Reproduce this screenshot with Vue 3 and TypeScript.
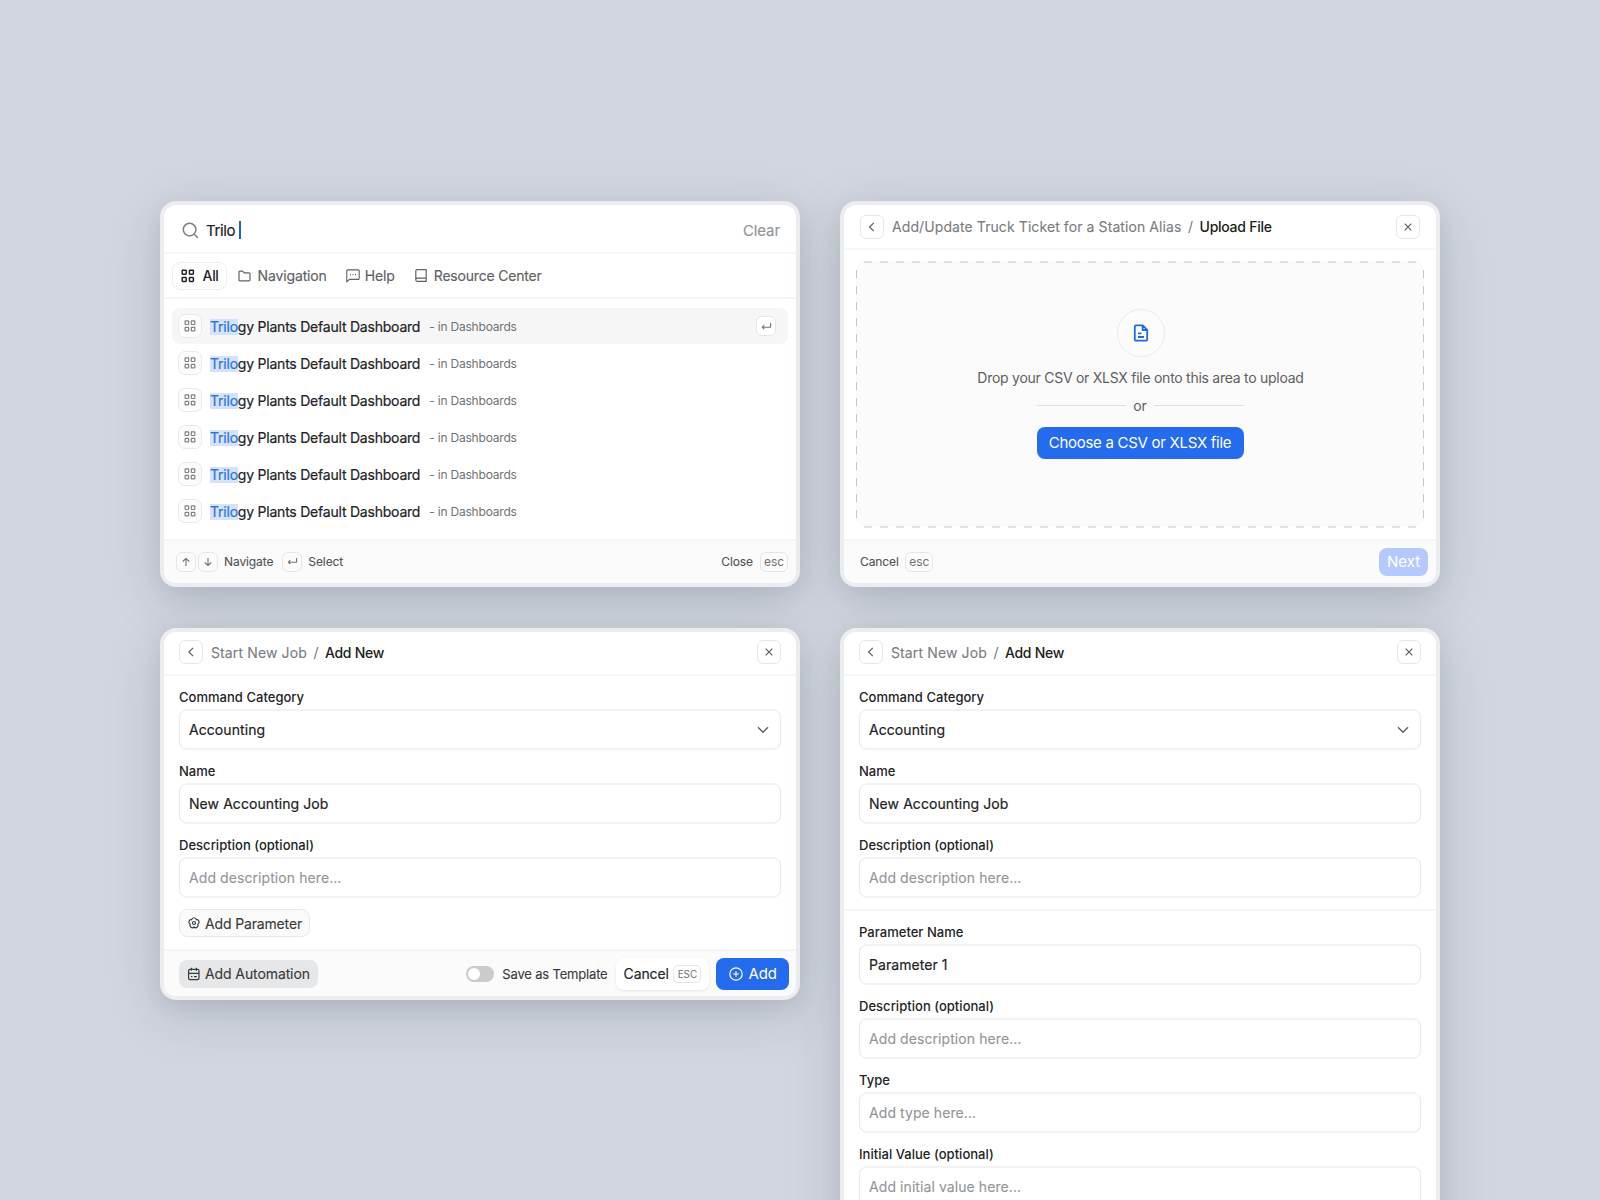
<script setup lang="ts">
interface Field {
  label: string
  value?: string
  placeholder?: string
  select?: boolean
}

const jobFields: Field[] = [
  { label: 'Command Category', value: 'Accounting', select: true },
  { label: 'Name', value: 'New Accounting Job' },
  { label: 'Description (optional)', placeholder: 'Add description here...' },
]

const parameterFields: Field[] = [
  { label: 'Parameter Name', value: 'Parameter 1' },
  { label: 'Description (optional)', placeholder: 'Add description here...' },
  { label: 'Type', placeholder: 'Add type here...' },
  { label: 'Initial Value (optional)', placeholder: 'Add initial value here...' },
]

const jobSections: Field[][] = [jobFields, parameterFields]
const results: number[] = [1, 2, 3, 4, 5, 6]
</script>

<template>
  <main class="page">
    <div class="column left">
      <!-- Command search -->
      <section class="card search-card">
        <div class="inner">
          <header class="search-bar">
            <svg class="search-icon" width="17" height="17" viewBox="0 0 17 17">
              <circle cx="7.6" cy="7.6" r="6.3" />
              <path d="M12.3 12.3 16 16" />
            </svg>
            <span class="query">Trilo</span><i class="caret"></i>
            <span class="clear">Clear</span>
          </header>

          <nav class="tabs">
            <span class="tab active">
              <svg width="14" height="14" viewBox="0 0 14 14">
                <rect x="1.2" y="1.2" width="4" height="4" rx=".6" /><rect x="8.4" y="1.2" width="4" height="4" rx=".6" />
                <rect x="1.2" y="8.4" width="4" height="4" rx=".6" /><rect x="8.4" y="8.4" width="4" height="4" rx=".6" />
              </svg>
              All
            </span>
            <span class="tab navigation">
              <svg width="13" height="12" viewBox="0 0 13 12">
                <path d="M1 10V2.2Q1 1.2 2 1.2H4.6L6.2 2.9H10.8Q12 2.9 12 4V9.8Q12 10.9 10.8 10.9H2Q1 10.9 1 10Z" />
              </svg>
              Navigation
            </span>
            <span class="tab help">
              <svg width="14" height="14" viewBox="0 0 14 14">
                <path d="M.8 12.8V1.9Q.8 .9 1.8 .9H12.2Q13.2 .9 13.2 1.9V9.4Q13.2 10.4 12.2 10.4H3.4Z" />
                <path d="M4 5.6h1M6.5 5.6h1M9 5.6h1" />
              </svg>
              Help
            </span>
            <span class="tab resource">
              <svg width="12" height="13" viewBox="0 0 12 13">
                <path d="M2.2 .7H11.2V12.3H2.3Q.8 12.3 .8 10.8V2.1Q.8 .7 2.2 .7ZM.8 10.6Q.9 9.2 2.3 9.2H11.2" />
              </svg>
              Resource Center
            </span>
          </nav>

          <ul class="results">
            <li v-for="n in results" :key="n" :class="{ selected: n === 1 }">
              <span class="tile">
                <svg width="12" height="12" viewBox="0 0 12 12">
                  <rect x="1.1" y=".9" width="3.5" height="3.6" rx=".4" /><rect x="7.3" y=".9" width="3.5" height="3.6" rx=".4" />
                  <rect x="1.1" y="7.3" width="3.5" height="3.6" rx=".4" /><rect x="7.3" y="7.3" width="3.5" height="3.6" rx=".4" />
                </svg>
              </span>
              <span class="title"><mark>Trilo</mark>gy Plants Default Dashboard</span>
              <span class="where">- in Dashboards</span>
              <span v-if="n === 1" class="key enter">
                <svg width="11" height="9" viewBox="0 0 11 9"><path d="M9.6 1V5.2H1.3M3.3 3.2 1.3 5.2 3.3 7.2" /></svg>
              </span>
            </li>
          </ul>

          <footer class="foot">
            <span class="key"><svg width="10" height="10" viewBox="0 0 10 10"><path d="M5 9V1.4M1.8 4.5 5 1.3 8.2 4.5" /></svg></span>
            <span class="key next-key"><svg width="10" height="10" viewBox="0 0 10 10"><path d="M5 1V8.6M1.8 5.5 5 8.7 8.2 5.5" /></svg></span>
            <span class="hint">Navigate</span>
            <span class="key select-key"><svg width="11" height="9" viewBox="0 0 11 9"><path d="M9.6 1V5.2H1.3M3.3 3.2 1.3 5.2 3.3 7.2" /></svg></span>
            <span class="hint">Select</span>
            <span class="hint push">Close</span>
            <span class="key esc">esc</span>
          </footer>
        </div>
      </section>

      <!-- New job, compact -->
      <section class="card job-card">
        <div class="inner">
          <header class="crumbs">
            <span class="square"><svg width="12" height="12" viewBox="0 0 12 12"><path d="M8.1 1.8 3.9 6 8.1 10.2" /></svg></span>
            <span class="parent">Start New Job</span><span class="slash">/</span><span class="current">Add New</span>
            <span class="square close"><svg width="12" height="12" viewBox="0 0 12 12"><path d="M2.7 2.7 9.3 9.3M9.3 2.7 2.7 9.3" /></svg></span>
          </header>
          <div class="form">
            <label v-for="f in jobFields" :key="f.label" class="field">
              <span class="label">{{ f.label }}</span>
              <span class="box">
                <span :class="f.value ? 'value' : 'placeholder'">{{ f.value ?? f.placeholder }}</span>
                <svg v-if="f.select" width="12" height="8" viewBox="0 0 12 8"><path d="M1 1.3 6 6.3 11 1.3" /></svg>
              </span>
            </label>
            <button class="soft-button">
              <svg width="14" height="14" viewBox="-7 -7 14 14">
                <path d="M-2.35-3.24A2.38 2.38 0 0 1 2.35-3.24A2.38 2.38 0 0 1 3.8 1.24A2.38 2.38 0 0 1 0 4A2.38 2.38 0 0 1-3.8 1.24A2.38 2.38 0 0 1-2.35-3.24Z" />
                <circle cx="0" cy="0" r="1.5" />
              </svg>
              Add Parameter
            </button>
          </div>
          <footer class="foot job-foot">
            <button class="grey-button">
              <svg width="14" height="14" viewBox="0 0 14 14">
                <rect x="1.6" y="2.4" width="10.4" height="10.2" rx="1.4" />
                <path d="M4.3 .8V3.8M9.4 .8V3.8M1.8 6.4H12M4 9.6H5.4M7 9.6H9.8" />
              </svg>
              Add Automation
            </button>
            <span class="toggle"></span>
            <span class="toggle-label">Save as Template</span>
            <button class="cancel-button">Cancel<span class="key caps">ESC</span></button>
            <button class="add-button">
              <svg width="14" height="14" viewBox="0 0 14 14"><circle cx="7" cy="7" r="6.2" /><path d="M7 4.2V9.8M4.2 7H9.8" /></svg>
              Add
            </button>
          </footer>
        </div>
      </section>
    </div>

    <div class="column right">
      <!-- Upload -->
      <section class="card upload-card">
        <div class="inner">
          <header class="crumbs">
            <span class="square"><svg width="12" height="12" viewBox="0 0 12 12"><path d="M7.8 1.8 3.6 6 7.8 10.2" /></svg></span>
            <span class="parent long">Add/Update Truck Ticket for a Station Alias</span><span class="slash">/</span><span class="current">Upload File</span>
            <span class="square close"><svg width="12" height="12" viewBox="0 0 12 12"><path d="M2.7 2.7 9.3 9.3M9.3 2.7 2.7 9.3" /></svg></span>
          </header>
          <div class="drop">
            <svg class="dashes" width="568" height="267" viewBox="0 0 568 267">
              <path d="M8 1H560M8 266H560M.5 9V259M567.5 9V259" />
            </svg>
            <span class="disc">
              <svg width="16" height="18" viewBox="0 0 16 18">
                <path d="M9.7 1.3H3.1Q1.8 1.3 1.8 2.6V15.4Q1.8 16.7 3.1 16.7H12.9Q14.2 16.7 14.2 15.4V5.8ZM9.6 1.6V6H14M5 9.4H8.4M5 13H11" />
              </svg>
            </span>
            <p class="drop-text">Drop your CSV or XLSX file onto this area to upload</p>
            <div class="or"><i></i><span>or</span><i></i></div>
            <button class="choose">Choose a CSV or XLSX file</button>
          </div>
          <footer class="foot upload-foot">
            <span class="hint">Cancel</span>
            <span class="key esc">esc</span>
            <button class="next">Next</button>
          </footer>
        </div>
      </section>

      <!-- New job, with parameter -->
      <section class="card long-card">
        <div class="inner">
          <header class="crumbs">
            <span class="square"><svg width="12" height="12" viewBox="0 0 12 12"><path d="M7.8 1.8 3.6 6 7.8 10.2" /></svg></span>
            <span class="parent">Start New Job</span><span class="slash">/</span><span class="current">Add New</span>
            <span class="square close"><svg width="12" height="12" viewBox="0 0 12 12"><path d="M2.7 2.7 9.3 9.3M9.3 2.7 2.7 9.3" /></svg></span>
          </header>
          <div v-for="(section, i) in jobSections" :key="i" class="form">
            <label v-for="f in section" :key="f.label" class="field">
              <span class="label">{{ f.label }}</span>
              <span class="box">
                <span :class="f.value ? 'value' : 'placeholder'">{{ f.value ?? f.placeholder }}</span>
                <svg v-if="f.select" width="12" height="8" viewBox="0 0 12 8"><path d="M1 1.3 6 6.3 11 1.3" /></svg>
              </span>
            </label>
          </div>
        </div>
      </section>
    </div>
  </main>
</template>

<style>
body {
  margin: 0;
  background: #d1d6df;
}
</style>

<style scoped>
* {
  box-sizing: border-box;
}

.page {
  width: 1600px;
  height: 1200px;
  overflow: hidden;
  padding: 201px 160px 0;
  display: flex;
  gap: 40px;
  background: #d1d6df;
  color: #222326;
  font-family: Inter, "Liberation Sans", sans-serif;
  font-size: 14px;
}

.column {
  display: flex;
  flex-direction: column;
  gap: 41px;
}
.left { width: 640px; }
.right { width: 600px; }

.card {
  flex: none;
  padding: 4px;
  border-radius: 16px;
  background: #ebedf0;
  box-shadow: 0 8px 20px rgba(45, 54, 70, .09), 0 14px 56px rgba(45, 54, 70, .15);
}
.search-card, .upload-card { height: 386px; }
.job-card { height: 372px; }
.long-card { height: 760px; }

.inner {
  height: 100%;
  display: flex;
  flex-direction: column;
  overflow: hidden;
  border-radius: 12px;
  background: #fff;
}

svg {
  flex: none;
  fill: none;
  stroke: currentColor;
  stroke-width: 1.2;
  stroke-linejoin: round;
}

button {
  display: flex;
  align-items: center;
  border: 0;
  padding: 0;
  font: inherit;
  color: inherit;
  white-space: nowrap;
}

/* search bar */
.search-bar {
  height: 49px;
  flex: none;
  display: flex;
  align-items: center;
  padding: 3px 16px 0 17.5px;
  border-bottom: 2px solid #f5f6f7;
  font-size: 15px;
}
.search-icon { color: #7d7f82; stroke-width: 1.5; }
.query { margin-left: 7.5px; letter-spacing: -.38px; -webkit-text-stroke: .2px; }
.caret { width: 2px; height: 18px; margin-left: 3.5px; background: #1b63c0; }
.clear { margin-left: auto; letter-spacing: -.1px; color: #939598; -webkit-text-stroke: .15px; }

.tabs {
  height: 45px;
  flex: none;
  display: flex;
  align-items: center;
  padding-left: 8px;
  border-bottom: 2px solid #f5f6f7;
  color: #5f6164;
  letter-spacing: -.13px;
  -webkit-text-stroke: .15px;
}
.tab { display: flex; align-items: center; white-space: nowrap; }
.tab.active {
  width: 55px;
  height: 28px;
  padding-left: 8px;
  gap: 7.5px;
  border: 1px solid #efeff0;
  border-radius: 8px;
  color: #222326;
  font-weight: 500;
  letter-spacing: -.3px;
  -webkit-text-stroke: 0;
}
.active svg { stroke-width: 1.5; }
.navigation { margin-left: 11px; gap: 6.5px; }
.help { margin-left: 19px; gap: 5px; }
.help svg { stroke-width: 1.1; }
.resource { margin-left: 20.5px; gap: 6.5px; letter-spacing: -.19px; }

.results {
  flex: 1;
  margin: 0;
  padding: 9px 8px 0;
  list-style: none;
}
.results li {
  height: 36px;
  margin-bottom: 1px;
  display: flex;
  align-items: center;
  padding: 0 12px 0 6px;
  border-radius: 8px;
}
.results li.selected { background: #f6f6f7; }
.tile {
  width: 24px;
  height: 24px;
  display: flex;
  align-items: center;
  justify-content: center;
  border: 1px solid #e9e9ea;
  border-radius: 7px;
  background: #fcfcfc;
  color: #828386;
}
.title { margin-left: 8px; letter-spacing: -.22px; -webkit-text-stroke: .2px; }
mark {
  display: inline-block;
  height: 16px;
  line-height: 16px;
  background: #d4e3fa;
  color: #2b74dd;
}
.where { margin-left: 9px; font-size: 12px; letter-spacing: -.2px; color: #707275; }

.key {
  width: 20px;
  height: 20px;
  display: flex;
  align-items: center;
  justify-content: center;
  border: 1px solid #e5e6e7;
  border-radius: 6px;
  color: #707275;
  font-size: 12px;
}
.key svg { stroke-width: 1.1; }
.enter { margin-left: auto; background: #fff; }
.key.esc { width: 28px; margin-left: 7px; }

.foot {
  height: 44px;
  flex: none;
  display: flex;
  align-items: center;
  padding: 0 8px 1px 12px;
  border-top: 2px solid #f4f5f5;
  background: #fbfbfb;
}
.next-key { margin-left: 2px; }
.select-key { margin-left: 9px; }
.hint { margin-left: 6px; font-size: 12px; letter-spacing: -.1px; color: #515356; -webkit-text-stroke: .1px; }
.hint.push { margin-left: auto; }

/* breadcrumbs */
.crumbs {
  height: 44px;
  flex: none;
  display: flex;
  align-items: center;
  padding: 0 15px 0 16px;
  border-bottom: 2px solid #f5f6f7;
}
.upload-card .crumbs { height: 45px; padding-right: 16px; }
.job-card .crumbs, .long-card .crumbs { padding-left: 15px; padding-bottom: 2px; }
.square {
  width: 24px;
  height: 24px;
  display: flex;
  align-items: center;
  justify-content: center;
  border: 1px solid #e6e6e7;
  border-radius: 6px;
  color: #5f6164;
}
.square.close { margin-left: auto; }
.parent { margin-left: 8px; letter-spacing: .12px; color: #7a7c7f; -webkit-text-stroke: .1px; }
.parent.long { letter-spacing: .09px; }
.slash { margin: 0 6.5px 0 6.5px; color: #76787b; }
.current { font-weight: 500; letter-spacing: -.27px; color: #1c1d20; }

/* forms */
.form { padding: 8px 15px 0; }
.form + .form { border-top: 2px solid #f5f6f7; margin-top: 3px; }
.field { display: block; height: 74px; }
.label {
  display: block;
  height: 25px;
  line-height: 27px;
  font-size: 13px;
  font-weight: 500;
  letter-spacing: .03px;
}
.box {
  height: 41px;
  display: flex;
  align-items: center;
  justify-content: space-between;
  padding: 0 11px 0 9px;
  border: 1px solid #e9e9ea;
  border-top: 2px solid #f3f3f4;
  border-bottom: 2px solid #f3f3f4;
  border-radius: 8px;
}
.box svg { color: #606265; stroke-width: 1.4; }
.value { letter-spacing: .07px; -webkit-text-stroke: .2px; }
.placeholder { letter-spacing: .08px; color: #939598; -webkit-text-stroke: .1px; }

.soft-button, .grey-button {
  height: 28px;
  padding-left: 7px;
  gap: 4px;
  border-radius: 8px;
  letter-spacing: -.15px;
  color: #38393c;
  -webkit-text-stroke: .1px;
}
.soft-button {
  width: 131px;
  margin-top: 3px;
  border: 1px solid #e9e9ea;
  background: #fafafa;
}
.grey-button { width: 139px; padding-left: 8px; background: #e6e7e8; letter-spacing: -.1px; }

.job-foot { height: 47px; margin-top: auto; padding: 0 7px 0 15px; }
.toggle {
  width: 28px;
  height: 16px;
  margin-left: auto;
  padding: 2px;
  border-radius: 8px;
  background: #cacbcd;
}
.toggle::before {
  content: "";
  display: block;
  width: 12px;
  height: 12px;
  border-radius: 50%;
  background: #fff;
}
.toggle-label { margin-left: 8px; font-size: 13px; letter-spacing: -.18px; color: #38393c; -webkit-text-stroke: .1px; }
.cancel-button {
  width: 92.5px;
  height: 32px;
  margin-left: 8.5px;
  padding-left: 7.5px;
  border-radius: 8px;
  background: #fff;
  box-shadow: 0 1px 3px rgba(0, 0, 0, .09);
  letter-spacing: -.08px;
  -webkit-text-stroke: .15px;
}
.key.caps { width: 28px; height: 18px; margin-left: 4.5px; border-radius: 5px; font-size: 10px; -webkit-text-stroke: 0; }
.add-button {
  width: 73px;
  height: 32px;
  margin-left: 7.5px;
  padding-left: 13px;
  gap: 5.5px;
  border-radius: 8px;
  background: #246bee;
  color: #fff;
  font-size: 15px;
  letter-spacing: -.15px;
}

/* upload */
.drop {
  position: relative;
  height: 267px;
  margin: 11px 12px 12px;
  display: flex;
  flex-direction: column;
  align-items: center;
  border-radius: 10px;
  background: #fbfbfb;
}
.dashes {
  position: absolute;
  inset: 0;
  stroke: #c6c7c9;
  stroke-width: 1;
  stroke-dasharray: 8 8;
}
.disc {
  width: 48px;
  height: 48px;
  margin-top: 48px;
  margin-left: 1.5px;
  display: flex;
  align-items: center;
  justify-content: center;
  border: 1px solid #ebebec;
  border-radius: 50%;
  background: #fcfcfc;
  color: #1d6cdc;
}
.disc svg { stroke-width: 1.8; }
.drop-text {
  margin: 10px 0 0 1px;
  line-height: 22px;
  letter-spacing: -.265px;
  color: #5e6063;
}
.or {
  width: 207px;
  height: 22px;
  margin-top: 5px;
  display: flex;
  align-items: center;
  gap: 7.5px;
  color: #5e6063;
}
.or i { flex: 1; height: 1px; background: #dedfe0; }
.choose {
  width: 207px;
  height: 32px;
  margin-top: 10.5px;
  justify-content: center;
  border-radius: 8px;
  background: #246bee;
  color: #fff;
  font-size: 15px;
  letter-spacing: -.28px;
}
.upload-foot { padding-left: 16px; padding-right: 8px; }
.upload-foot .hint { margin-left: 0; }
.upload-foot .key.esc { margin-left: 6.5px; }
.next {
  width: 49px;
  height: 28px;
  margin-left: auto;
  justify-content: center;
  border-radius: 8px;
  background: #b4cafe;
  color: #fff;
  font-size: 15px;
}
</style>
